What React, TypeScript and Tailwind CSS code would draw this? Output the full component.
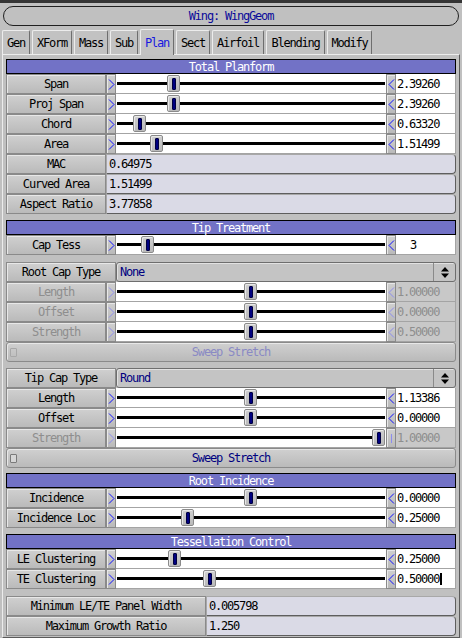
import React from "react";

const raised =
  "bg-linear-to-b from-[#d0d0d0] to-[#bababa] border border-[#8a8a8a] shadow-[inset_1px_1px_0_#e8e8e8]";

function Chevron({ dir, color }: { dir: "l" | "r"; color: string }) {
  return (
    <svg width="7" height="11" viewBox="0 0 7 11">
      <polyline
        points={dir === "r" ? "1,0.5 6,5.5 1,10.5" : "6,0.5 1,5.5 6,10.5"}
        fill="none"
        stroke={color}
        strokeWidth="1"
      />
    </svg>
  );
}

function ArrowBtn({ dir, dis, bar }: { dir: "l" | "r"; dis?: boolean; bar?: boolean }) {
  const color = dis ? "#8c8cf0" : "#1010ff";
  return (
    <div className={`${raised} w-[10px] flex items-center justify-center`}>
      {bar ? <div className="w-[1px] h-[9px] bg-[#8c8cf0]" /> : <Chevron dir={dir} color={color} />}
    </div>
  );
}

function Header({ title }: { title: string }) {
  return (
    <div className="h-[15px] bg-[#7272c6] border border-black flex items-center justify-center text-white">
      {title}
    </div>
  );
}

type SRow = {
  label: string;
  value: string;
  thumb: number;
  dis?: boolean;
  rightDis?: boolean;
  valDis?: boolean;
  rightBar?: boolean;
  cursor?: boolean;
  valPad?: boolean;
};

function SliderRow(r: SRow) {
  const valDis = r.valDis ?? r.dis;
  const rightDis = r.rightDis ?? r.dis;
  return (
    <div className="flex h-[20px]">
      <div
        className={`${raised} w-[100px] flex items-center justify-center ${
          r.dis ? "text-[#8e8e8e]" : "text-black"
        }`}
      >
        {r.label}
      </div>
      <ArrowBtn dir="r" dis={r.dis} />
      <div className="relative flex-1 bg-white border-b border-[#a4a4a4]">
        <div className="absolute left-[1px] right-[1px] top-[8px] h-[3px] bg-black" />
        <div
          className={`${raised} absolute top-[1px] h-[17px] w-[13px] flex items-center justify-center rounded-[2px]`}
          style={{ left: r.thumb - 116 }}
        >
          <div className="w-[4px] h-[12px] bg-[#000080] border border-[#000040] rounded-[1px]" />
        </div>
      </div>
      <ArrowBtn dir="l" dis={rightDis} bar={r.rightBar} />
      <div
        className={`w-[60px] flex items-center border-b border-r border-[#a4a4a4] ${
          valDis ? "bg-[#c8c8c8] text-[#8e8e8e]" : "bg-white text-black"
        } ${r.valPad ? "pl-[14px]" : "pl-[1px]"}`}
      >
        {r.value}
        {r.cursor && <span className="ml-[1px] w-[2px] h-[12px] bg-black" />}
      </div>
    </div>
  );
}

function OutRow({ label, value, lw = "w-[100px]" }: { label: string; value: string; lw?: string }) {
  return (
    <div className="flex h-[20px]">
      <div className={`${raised} ${lw} flex items-center justify-center text-black`}>{label}</div>
      <div className="flex-1 flex items-center pl-[2px] bg-[#dadae6] border border-[#a8a8a8] border-r-[#5e5e5e] border-b-[#5e5e5e] rounded-r-[4px] text-black">
        {value}
      </div>
    </div>
  );
}

function ChoiceRow({ label, value }: { label: string; value: string }) {
  return (
    <div className="flex h-[20px]">
      <div className={`${raised} w-[110px] flex items-center justify-center text-black`}>{label}</div>
      <div className="flex-1 flex border border-[#6e6e6e] rounded-[3px] bg-[#c4c4c4] shadow-[inset_1px_1px_0_#e2e2e2]">
        <div className="flex-1 flex items-center pl-[3px] text-[#000080]">{value}</div>
        <div className="w-[22px] border-l border-[#8a8a8a] flex items-center justify-center">
          <svg width="8" height="11" viewBox="0 0 8 11">
            <polygon points="4,0 8,4.5 0,4.5" fill="black" />
            <polygon points="0,6.5 8,6.5 4,11" fill="black" />
          </svg>
        </div>
      </div>
    </div>
  );
}

function SweepRow({ dis }: { dis?: boolean }) {
  return (
    <div className={`${raised} h-[20px] flex items-center rounded-[3px]`}>
      <div
        className={`ml-[3px] w-[7px] h-[9px] rounded-[1px] border ${
          dis ? "border-[#a8a8a8]" : "border-[#7a7a7a] bg-[#d6d6d6]"
        }`}
      />
      <div className={`flex-1 text-center ${dis ? "text-[#8a8ac4]" : "text-[#000080]"}`}>Sweep Stretch</div>
      <div className="w-[10px]" />
    </div>
  );
}

const tabs: [string, number][] = [
  ["Gen", 28],
  ["XForm", 40],
  ["Mass", 34],
  ["Sub", 28],
  ["Plan", 34],
  ["Sect", 34],
  ["Airfoil", 52],
  ["Blending", 59],
  ["Modify", 45],
];

export default function App() {
  return (
    <div className="w-[462px] h-[638px] bg-[#c0c0c0] overflow-hidden font-['DejaVu_Sans_Mono',monospace] text-[12px] tracking-[-1.2px] leading-none">
      <div className="h-[3px] bg-[#353535]" />
      <div className="mx-[3px] mt-[3px] h-[20px] rounded-full border border-[#202020] flex items-center justify-center text-[#0a0a9a]">
        Wing: WingGeom
      </div>
      <div className="flex items-end gap-[2px] pl-[2px] mt-[3px] h-[25px]">
        {tabs.map(([t, w]) => {
          const sel = t === "Plan";
          return (
            <div
              key={t}
              style={{ width: w }}
              className={`flex items-center justify-center rounded-t-[2px] border-t border-l border-[#ececec] border-r border-r-[#6e6e6e] bg-[#c2c2c2] ${
                sel ? "h-[26px] -mb-[1px] relative z-10 text-[#1818e0]" : "h-[24px] text-black"
              }`}
            >
              {t}
            </div>
          );
        })}
      </div>
      <div className="mx-[2px] h-[584px] border-t border-l border-[#ececec] border-r border-r-[#5a5a5a] border-b border-b-[#5a5a5a] px-[3px] pt-[4px] flex flex-col">
        <Header title="Total Planform" />
        <SliderRow label="Span" value="2.39260" thumb={167} />
        <SliderRow label="Proj Span" value="2.39260" thumb={167} />
        <SliderRow label="Chord" value="0.63320" thumb={133} />
        <SliderRow label="Area" value="1.51499" thumb={150} />
        <OutRow label="MAC" value="0.64975" />
        <OutRow label="Curved Area" value="1.51499" />
        <OutRow label="Aspect Ratio" value="3.77858" />

        <div className="mt-[6px]">
          <Header title="Tip Treatment" />
        </div>
        <SliderRow label="Cap Tess" value="3" thumb={141} valPad />

        <div className="mt-[7px]">
          <ChoiceRow label="Root Cap Type" value="None" />
        </div>
        <SliderRow label="Length" value="1.00000" thumb={244} dis />
        <SliderRow label="Offset" value="0.00000" thumb={244} dis />
        <SliderRow label="Strength" value="0.50000" thumb={244} dis />
        <SweepRow dis />

        <div className="mt-[6px]">
          <ChoiceRow label="Tip Cap Type" value="Round" />
        </div>
        <SliderRow label="Length" value="1.13386" thumb={244} />
        <SliderRow label="Offset" value="0.00000" thumb={244} />
        <SliderRow label="Strength" value="1.00000" thumb={372} dis rightBar />
        <SweepRow />

        <div className="mt-[5px]">
          <Header title="Root Incidence" />
        </div>
        <SliderRow label="Incidence" value="0.00000" thumb={244} />
        <SliderRow label="Incidence Loc" value="0.25000" thumb={181} />

        <div className="mt-[6px]">
          <Header title="Tessellation Control" />
        </div>
        <SliderRow label="LE Clustering" value="0.25000" thumb={168} />
        <SliderRow label="TE Clustering" value="0.50000" thumb={203} cursor />

        <div className="mt-[7px]">
          <OutRow label="Minimum LE/TE Panel Width" value="0.005798" lw="w-[200px]" />
        </div>
        <OutRow label="Maximum Growth Ratio" value="1.250" lw="w-[200px]" />
      </div>
    </div>
  );
}
